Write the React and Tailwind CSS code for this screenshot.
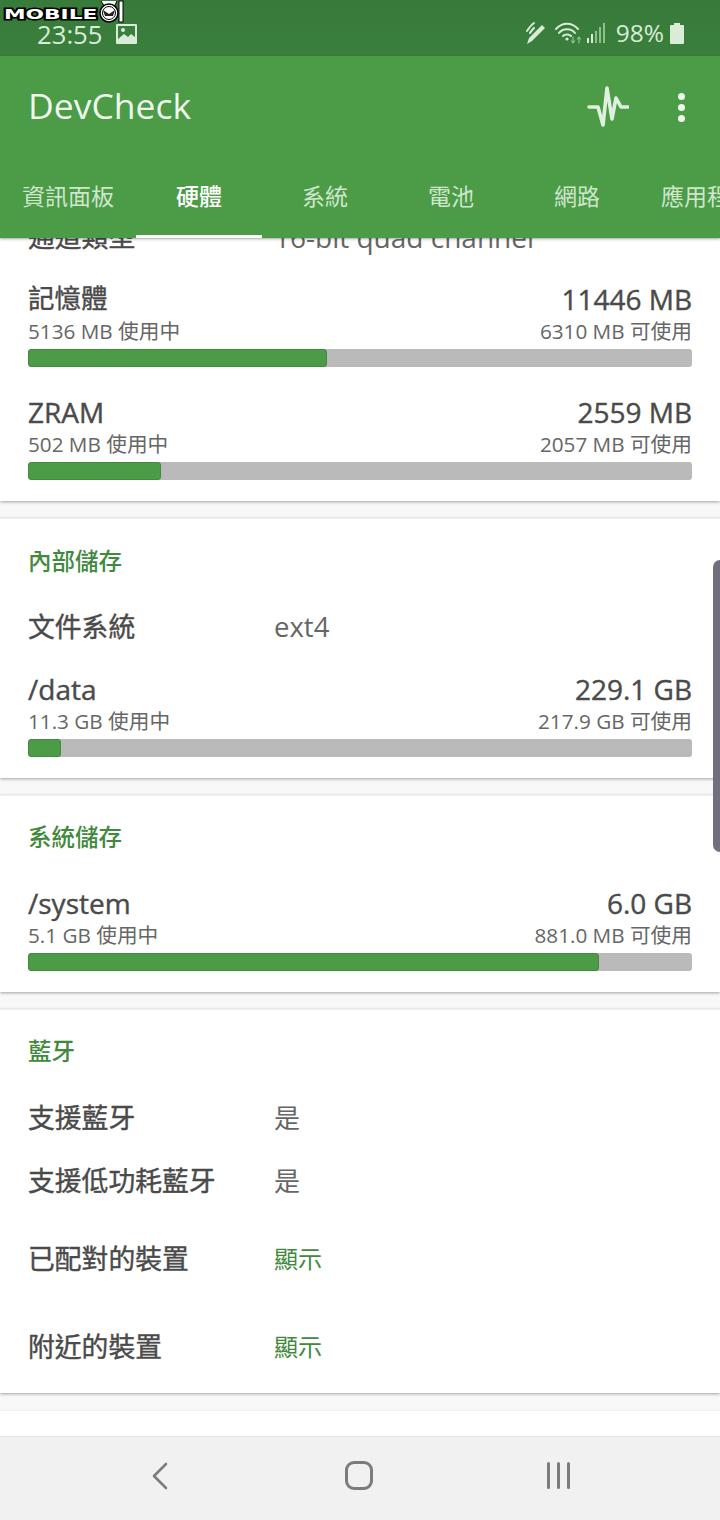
import React from "react";

const tabs = [
  { name: "資訊面板", width: "w-[136px]" },
  { name: "硬體", width: "w-[126px]", active: true },
  { name: "系統", width: "w-[126px]" },
  { name: "電池", width: "w-[126px]" },
  { name: "網路", width: "w-[126px]" },
];

const StatusBar = () => (
  <div className="h-[56px] shrink-0 bg-gradient-to-b from-[#377a39] to-[#3b7f3d] flex items-center justify-between pl-[37px] pr-[36px] text-[#d9ecd8] text-[24.500px] leading-none pt-[15px] pb-[3px]">
    <div className="flex items-center gap-[13px]">
      <span className="text-[25.700px] mt-[1px]">23:55</span>
      <svg width="21" height="20" viewBox="0 0 21 20">
        <rect width="21" height="20" rx="1" fill="#d9ecd8" />
        <rect x="2" y="2" width="17" height="13" fill="#3b7f3d" />
        <circle cx="7" cy="6" r="2" fill="#d9ecd8" />
        <path d="M2 15l6-5 4 3 3-3 4 3v5H2z" fill="#d9ecd8" />
      </svg>
    </div>
    <div className="flex items-center -mt-[2px]">
      <svg width="24" height="24" viewBox="0 0 24 24" fill="none" stroke="#d9ecd8" className="mr-[7px]">
        <path d="M3 23l2-6L18 4l3 3L8 20z" fill="#d9ecd8" stroke="none" />
        <path d="M3 10c2-3 4-6 7-8M6 12c1-2 2-3 4-5" strokeWidth="2" strokeLinecap="round" />
      </svg>
      <svg width="26" height="22" viewBox="0 0 26 22" fill="none" stroke="#d9ecd8" strokeWidth="2" strokeLinecap="round" className="mr-[6px]">
        <path d="M1 7c6-7 16-7 22 0M4 11c4-5 12-5 16 0M8 14c2-2 6-2 8 0" />
        <circle cx="12" cy="17" r="1.6" fill="#d9ecd8" stroke="none" />
        <path d="M18 15v6M16.500 19l1.500 2 1.500-2M24 21v-6M22.500 17l1.500-2 1.500 2" stroke="#8ebf8d" strokeWidth="1.2" />
      </svg>
      <svg width="19" height="20" viewBox="0 0 19 20" className="mr-[10px]">
        <rect x="0" y="15" width="2" height="5" fill="#d9ecd8" />
        <rect x="4" y="11" width="2" height="9" fill="#d9ecd8" />
        <rect x="8" y="8" width="2" height="12" fill="#8ebf8d" />
        <rect x="12" y="4" width="2" height="16" fill="#8ebf8d" />
        <rect x="16" y="0" width="2" height="20" fill="#8ebf8d" />
      </svg>
      <span className="mr-[6px]">98%</span>
      <svg width="14" height="21" viewBox="0 0 14 21">
        <path d="M4 0h6v2h3a1 1 0 011 1v17a1 1 0 01-1 1H1a1 1 0 01-1-1V3a1 1 0 011-1h3z" fill="#d9ecd8" />
      </svg>
    </div>
  </div>
);

const AppBar = () => (
  <div className="relative z-10 shrink-0 bg-[#4b9b47] shadow-[0_1px_3px_rgba(0,0,0,0.3)]">
    <div className="h-[105px] flex items-center justify-between pl-[28px] pr-[35px]">
      <span className="text-[35.500px] text-[#eef6ed] leading-none pb-[6px]">DevCheck</span>
      <div className="flex items-center gap-[49px] pb-[3px]">
        <svg width="42" height="42" viewBox="0 0 42 42" fill="none" stroke="#dff0de" strokeWidth="3.6" strokeLinecap="round" strokeLinejoin="round">
          <path d="M2 21H11L16 39L20 2L25 33L29 12L34 21H41" />
        </svg>
        <div className="flex flex-col gap-[4px]">
          <div className="w-[7px] h-[7px] rounded-full bg-[#eef6ed]" />
          <div className="w-[7px] h-[7px] rounded-full bg-[#eef6ed]" />
          <div className="w-[7px] h-[7px] rounded-full bg-[#eef6ed]" />
        </div>
      </div>
    </div>
    <div className="h-[77px] flex overflow-hidden text-[23px] text-[#cfe6cd]">
      {tabs.map((tab) => (
        <div
          key={tab.name}
          className={`${tab.width} shrink-0 flex items-center justify-center pb-[3px] border-b-[3px] ${
            tab.active ? "border-white text-white font-medium" : "border-transparent"
          }`}
        >
          {tab.name}
        </div>
      ))}
      <div className="pl-[21px] pb-[6px] flex items-center whitespace-nowrap">應用程式</div>
    </div>
  </div>
);

const Card = ({ children, className = "" }) => (
  <div className={`bg-white border-t border-[#efefef] shadow-[0_1px_3px_rgba(0,0,0,0.35)] mb-[17px] px-[28px] ${className}`}>
    {children}
  </div>
);

const SectionTitle = ({ children }) => (
  <div className="h-[24px] text-[23.500px] leading-[24px] font-medium text-[#3f8a3c]">{children}</div>
);

const InfoRow = ({ label, value, green, valueClass = "text-[26px] text-[#666666]", className = "" }) => (
  <div className={`flex items-center ${className}`}>
    <div className="w-[246px] text-[26.800px] text-[#4a4a4a] [-webkit-text-stroke:0.4px_#4a4a4a]">{label}</div>
    <div className={green ? "text-[24px] text-[#3f8a3c]" : valueClass}>{value}</div>
  </div>
);

const UsageBar = ({ title, titleClass = "text-[28px]", total, used, free, percent, className = "" }) => (
  <div className={className}>
    <div className="flex justify-between items-center h-[34px] text-[28px] text-[#4a4a4a] [-webkit-text-stroke:0.4px_#4a4a4a]">
      <span className={titleClass}>{title}</span>
      <span>{total}</span>
    </div>
    <div className="flex justify-between items-center h-[30px] mt-[1px] text-[20.700px] text-[#666666]">
      <span>{used} 使用中</span>
      <span>{free} 可使用</span>
    </div>
    <div className="h-[18px] mt-[2px] rounded-[3px] bg-[#bababa] overflow-hidden">
      <div className="h-full rounded-[3px] bg-[#4b9b47] border border-[#43893f]" style={{ width: `${percent}%` }} />
    </div>
  </div>
);

const NavBar = () => (
  <div className="relative z-10 h-[84px] shrink-0 bg-[#f1f1f1] border-t border-[#e8e8e8] flex items-center pb-[6px]">
    <div className="w-[324px] flex justify-center">
      <svg width="18" height="28" viewBox="0 0 18 28" fill="none" stroke="#7c7c7c" strokeWidth="2.6" strokeLinecap="round" strokeLinejoin="round">
        <path d="M15 2L3 14l12 12" />
      </svg>
    </div>
    <div className="w-[78px] flex justify-center">
      <div className="w-[28px] h-[29px] rounded-[9px] border-[3px] border-[#7c7c7c]" />
    </div>
    <div className="w-[326px] flex justify-center gap-[7px]">
      <div className="w-[3px] h-[27px] rounded-full bg-[#7c7c7c]" />
      <div className="w-[3px] h-[27px] rounded-full bg-[#7c7c7c]" />
      <div className="w-[3px] h-[27px] rounded-full bg-[#7c7c7c]" />
    </div>
  </div>
);

export default function App() {
  return (
    <div
      className="relative w-[720px] h-[1520px] overflow-hidden flex flex-col bg-[#f8f8f8]"
      style={{ fontFamily: '"Open Sans", "Noto Sans CJK TC", sans-serif' }}
    >
      <StatusBar />
      <AppBar />

      <div className="flex-1 overflow-hidden">
        <Card className="pb-[21px]">
          <InfoRow label="通道類型" value="16-bit quad channel" valueClass="text-[28px] text-[#666666]" className="-mt-[22px] h-[40px]" />
          <UsageBar title="記憶體" titleClass="text-[26.500px]" total="11446 MB" used="5136 MB" free="6310 MB" percent={45} className="mt-[25px]" />
          <UsageBar title="ZRAM" total="2559 MB" used="502 MB" free="2057 MB" percent={20} className="mt-[28px]" />
        </Card>

        <Card className="pb-[21px] pt-[30px]">
          <SectionTitle>內部儲存</SectionTitle>
          <InfoRow label="文件系統" value="ext4" valueClass="text-[27.500px] text-[#666666]" className="mt-[34px] h-[40px]" />
          <UsageBar title="/data" total="229.1 GB" used="11.3 GB" free="217.9 GB" percent={5} className="mt-[25px]" />
        </Card>

        <Card className="pb-[21px] pt-[29px]">
          <SectionTitle>系統儲存</SectionTitle>
          <UsageBar title="/system" total="6.0 GB" used="5.1 GB" free="881.0 MB" percent={86} className="mt-[37px]" />
        </Card>

        <Card className="pb-[26px] pt-[29px]">
          <SectionTitle>藍牙</SectionTitle>
          <InfoRow label="支援藍牙" value="是" className="mt-[35px] h-[40px]" />
          <InfoRow label="支援低功耗藍牙" value="是" className="mt-[23px] h-[40px]" />
          <InfoRow label="已配對的裝置" value="顯示" green className="mt-[38px] h-[40px]" />
          <InfoRow label="附近的裝置" value="顯示" green className="mt-[48px] h-[40px]" />
        </Card>

        <div className="bg-white border-t border-[#efefef] h-[40px]" />
      </div>

      <NavBar />

      {/* watermark over the status bar */}
      <div className="absolute left-[4px] top-[3px] z-20 flex items-center">
        <span
          className="w-[95px] text-[14px] leading-[20px] font-bold text-white origin-left scale-x-[1.55] whitespace-nowrap [-webkit-text-stroke:3px_black] [paint-order:stroke_fill]"
          style={{ fontFamily: '"DejaVu Sans", sans-serif' }}
        >
          MOBILE
        </span>
        <svg width="26" height="24" viewBox="0 0 26 24" className="-mt-[3px]">
          <path d="M2 1l4 6h9l3-6" fill="#fff" stroke="#000" />
          <circle cx="10" cy="13" r="9" fill="#fff" stroke="#000" strokeWidth="1.5" />
          <circle cx="10" cy="13" r="6.500" fill="none" stroke="#000" strokeWidth="1" />
          <path d="M4 10l6 4 6-4-2 6h-8z" fill="#222" />
          <rect x="20" y="1" width="4" height="21" fill="#fff" stroke="#000" />
        </svg>
      </div>

      {/* scroll handle */}
      <div className="absolute right-0 top-[560px] z-20 w-[7px] h-[292px] rounded-l-[7px] bg-[#6f6f7e]" />
    </div>
  );
}
